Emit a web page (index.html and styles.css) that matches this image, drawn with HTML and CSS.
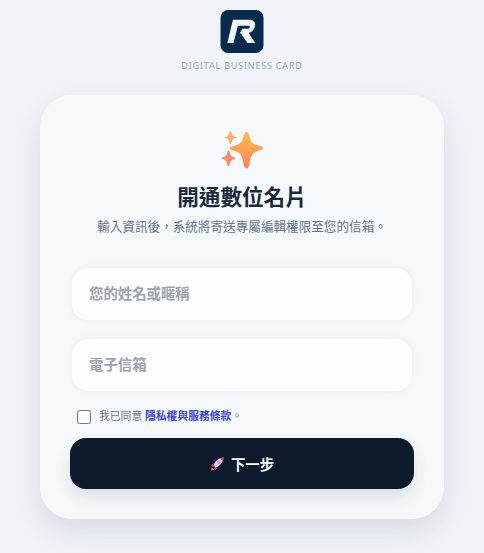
FILE: index.html
```html
<!DOCTYPE html>
<html lang="zh-Hant">
<head>
<meta charset="utf-8">
<title>開通數位名片</title>
<link rel="stylesheet" href="styles.css">
</head>
<body>
<header class="brand">
  <svg class="logo" viewBox="0 0 44 44" width="44" height="43" aria-hidden="true">
    <rect width="44" height="44" rx="8" fill="#082a4e"/>
    <path d="M12.700 10H29.500C34 10 36 12.500 35.400 16.200 34.800 20 32.300 22.600 28.800 23.500L35.500 33.700H27.500L21 24H19.500L22.500 19.300H27.500C29 19.300 29.900 18.700 30 17.500 30.100 16.500 29.400 16 28 16H17.800L13.300 33.700H7z" fill="#f2f5f8"/>
  </svg>
  <p class="tagline">DIGITAL BUSINESS CARD</p>
</header>
<main class="card">
  <svg class="sparkle" viewBox="0 0 46 42" width="46" height="42" aria-hidden="true">
    <defs>
      <linearGradient id="sg" x1="0" y1="0" x2="0" y2="1">
        <stop offset="0" stop-color="#ffc04d"/>
        <stop offset="1" stop-color="#ff7d5c"/>
      </linearGradient>
    </defs>
    <path d="M25.500 2c1.800 0 2.700 2 3.300 5 1.100 5.500 3 7.200 10.700 9.300 3.500.9 3.500 3 0 3.900-7.700 2.100-9.600 4.500-10.700 12.300-.4 3.500-1.500 6-3.300 6s-2.900-2.500-3.300-6C21.100 24.700 19.200 22.300 11.500 20.200c-3.500-.9-3.500-3 0-3.900C19.200 14.200 21.100 12.500 22.200 7c.6-3 1.500-5 3.300-5z" fill="url(#sg)"/>
    <path d="M9.500 1c.7 0 1 .8 1.200 1.900.5 2.400 1.300 3.200 3.700 3.800 1.200.3 1.200 1.100 0 1.400-2.400.6-3.200 1.600-3.700 4.300-.2 1.100-.5 1.900-1.200 1.900s-1-.8-1.200-1.900C7.800 9.700 7 8.700 4.600 8.100c-1.200-.3-1.200-1.100 0-1.400 2.400-.6 3.200-1.400 3.700-3.800C8.500 1.800 8.800 1 9.500 1z" fill="#ffb35a"/>
    <path d="M7.500 20.500c.8 0 1.100.9 1.300 2 .6 3 1.700 4 4.700 4.800 1.400.4 1.400 1.300 0 1.700-3 .8-4.100 2.100-4.700 5.200-.2 1.100-.5 2-1.300 2s-1.100-.9-1.300-2C5.600 31.100 4.500 29.800 1.500 29c-1.400-.4-1.400-1.300 0-1.700 3-.8 4.100-1.800 4.700-4.800.2-1.100.5-2 1.300-2z" fill="#ff8a68"/>
  </svg>
  <h1 class="title">開通數位名片</h1>
  <p class="subtitle">輸入資訊後，系統將寄送專屬編輯權限至您的信箱。</p>
  <form class="form">
    <input class="field" type="text" placeholder="您的姓名或暱稱">
    <input class="field" type="email" placeholder="電子信箱">
    <label class="consent">
      <input class="check" type="checkbox">
      <span class="consent-text">我已同意 <a class="link" href="#">隱私權與服務條款</a>。</span>
    </label>
    <button class="submit" type="button">
      <svg class="rocket" viewBox="0 0 16 16" width="15" height="15" aria-hidden="true">
        <path d="M1 15.500l.8-3.500 2.700 2.700z" fill="#f08a24"/>
        <path d="M3.500 8L1.300 9.800l.9 1.900 2.300-.7zM8 12.500l-1.800 2.200-1.900-.9.700-2.300z" fill="#f0367a"/>
        <path d="M3.800 10C5 6 8.500 2.700 12.800 1.800l1.400 1.400C13.300 7.500 10 11 6 12.200z" fill="#eccfe0"/>
        <path d="M10.800 2.600l2.300-1.200 2-.4-.4 2-1.200 2.300z" fill="#f02d6c"/>
        <circle cx="9.400" cy="6.600" r="1.500" fill="#7fa8e8"/>
      </svg>
      <span>下一步</span>
    </button>
  </form>
</main>
</body>
</html>
```
FILE: styles.css
```css
* { box-sizing: border-box; }
html, body { margin: 0; height: 100%; }
body {
  background: #f0f4f8;
  font-family: "Noto Sans", "Noto Sans CJK TC", sans-serif;
  display: flex;
  flex-direction: column;
  align-items: center;
  overflow: hidden;
}
.brand {
  display: flex;
  flex-direction: column;
  align-items: center;
  padding-top: 10px;
}
.logo { display: block; }
.tagline {
  margin: 6px 0 0;
  font-size: 9px;
  line-height: 13px;
  letter-spacing: .8px;
  color: #94a3b8;
}
.card {
  margin-top: 23px;
  width: 404px;
  height: 424px;
  padding: 35px 30px 30px;
  border-radius: 32px;
  background: #f6f9fc;
  box-shadow: 0 12px 28px rgba(30, 50, 75, .12);
  display: flex;
  flex-direction: column;
  align-items: center;
}
.sparkle { display: block; flex: none; margin-left: 4px; }
.title {
  margin: 9px 0 0;
  font-size: 21.6px;
  line-height: 31px;
  font-weight: 700;
  color: #1a2a3a;
}
.subtitle {
  margin: 6px 0 0;
  font-size: 12.6px;
  line-height: 18px;
  color: #64748b;
}
.form {
  margin-top: 32px;
  width: 100%;
  display: flex;
  flex-direction: column;
  align-items: center;
}
.field {
  display: block;
  width: 340px;
  height: 52px;
  margin-bottom: 19px;
  padding: 0 17px 2px;
  border: 0;
  border-radius: 16px;
  background: #fcfdff;
  box-shadow: 0 0 6px rgba(205, 215, 228, .3);
  font: 700 14.4px "Noto Sans", "Noto Sans CJK TC", sans-serif;
  color: #1e293b;
  outline: 0;
}
.field::placeholder { color: #9ca3af; opacity: 1; }
.consent {
  align-self: flex-start;
  margin: 0 0 14px 7px;
  display: flex;
  align-items: flex-start;
  gap: 8px;
  font-size: 10.8px;
  line-height: 12px;
  color: #64748b;
}
.check { margin: 0; flex: none; width: 14px; height: 14px; }
.link { color: #4346d8; font-weight: 700; text-decoration: none; }
.submit {
  width: 344px;
  height: 51px;
  border: 0;
  border-radius: 16px;
  background: #0d1a2b;
  color: #fff;
  font: 700 14.4px "Noto Sans", "Noto Sans CJK TC", sans-serif;
  display: flex;
  align-items: center;
  justify-content: center;
  gap: 6px;
  box-shadow: 0 8px 16px rgba(15, 25, 45, .12);
}
.rocket { display: block; }
```
